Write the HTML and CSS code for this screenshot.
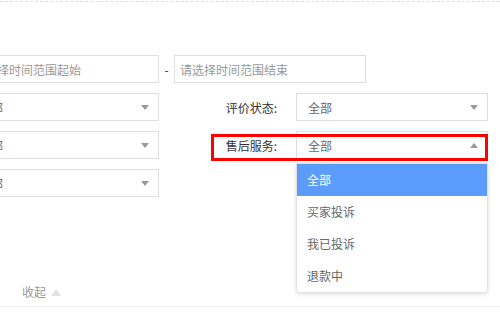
FILE: index.html
```html
<!DOCTYPE html>
<html lang="zh-CN">
<head>
  <meta charset="UTF-8">
  <meta name="viewport" content="width=device-width, initial-scale=1.0">
  <title>筛选</title>
  <link rel="stylesheet" href="styles.css">
</head>
<body>
  <div class="panel">
    <form class="filters">
      <div class="row">
        <input type="text" class="input" placeholder="请选择时间范围起始">
        <span class="dash">-</span>
        <input type="text" class="input" placeholder="请选择时间范围结束">
      </div>

      <div class="row">
        <div class="select"><span>全部</span><i class="caret"></i></div>
        <label class="label">评价状态:</label>
        <div class="select"><span>全部</span><i class="caret"></i></div>
      </div>

      <div class="row row-marked">
        <div class="select"><span>全部</span><i class="caret"></i></div>
        <label class="label">售后服务:</label>
        <div class="select-wrap">
          <div class="select"><span>全部</span><i class="caret caret-up"></i></div>
          <ul class="dropdown">
            <li class="active">全部</li>
            <li>买家投诉</li>
            <li>我已投诉</li>
            <li>退款中</li>
          </ul>
        </div>
        <div class="mark"></div>
      </div>

      <div class="row">
        <div class="select"><span>全部</span><i class="caret"></i></div>
      </div>
    </form>

    <div class="toggle">收起 <i class="toggle-icon"></i></div>
  </div>
</body>
</html>
```

FILE: styles.css
```css
body {
  margin: 0;
  font-family: "Noto Sans CJK SC", "Microsoft YaHei", sans-serif;
  font-size: 12px;
  color: #333;
  background-color: #fff;
  overflow: hidden;
}

.panel {
  border-top: 1px dashed #ddd;
  border-bottom: 1px solid #eee;
  margin-top: 1px;
}

.filters {
  margin: 53px 0 0 -33px;
  display: flex;
  flex-direction: column;
  gap: 10px;
}

.row {
  display: flex;
  align-items: center;
  height: 28px;
}

.row-marked {
  position: relative;
}

.input,
.select {
  box-sizing: border-box;
  width: 192px;
  height: 28px;
  border: 1px solid #ddd;
  background-color: #fff;
  font-family: inherit;
  font-size: 12px;
  color: #666;
}

.input {
  padding: 0 5px;
  outline: none;
}

.input::placeholder {
  color: #999;
}

.dash {
  width: 15px;
  text-align: center;
  color: #333;
}

.select {
  display: flex;
  align-items: center;
  justify-content: space-between;
  padding: 0 9px 0 11px;
}

.caret {
  width: 0;
  height: 0;
  border-left: 4px solid transparent;
  border-right: 4px solid transparent;
  border-top: 5px solid #999;
}

.caret-up {
  border-top: none;
  border-bottom: 5px solid #999;
}

.label {
  width: 137px;
  box-sizing: border-box;
  padding-right: 19px;
  text-align: right;
  color: #333;
}

.select-wrap {
  position: relative;
}

.dropdown {
  position: absolute;
  top: 32px;
  left: 0;
  width: 192px;
  box-sizing: border-box;
  margin: 0;
  padding: 0;
  list-style-type: none;
  background-color: #fff;
  border: 1px solid #e2e2e2;
  border-radius: 0 0 4px 4px;
  box-shadow: 0 1px 4px rgba(0, 0, 0, 0.15);
  z-index: 2;
}

.dropdown li {
  height: 32px;
  line-height: 32px;
  padding-left: 10px;
  color: #666;
}

.dropdown li.active {
  background-color: #5b9bf9;
  color: #fff;
}

.mark {
  position: absolute;
  left: 244px;
  top: 3px;
  width: 277px;
  height: 27px;
  box-sizing: border-box;
  border: 3px solid #f00;
  z-index: 1;
}

.toggle {
  margin-top: 85px;
  padding: 0 0 4px 22px;
  line-height: 20px;
  color: #999;
  display: flex;
  align-items: center;
  gap: 5px;
}

.toggle-icon {
  width: 0;
  height: 0;
  border-left: 5px solid transparent;
  border-right: 5px solid transparent;
  border-bottom: 7px solid #e3e3e3;
}
```
